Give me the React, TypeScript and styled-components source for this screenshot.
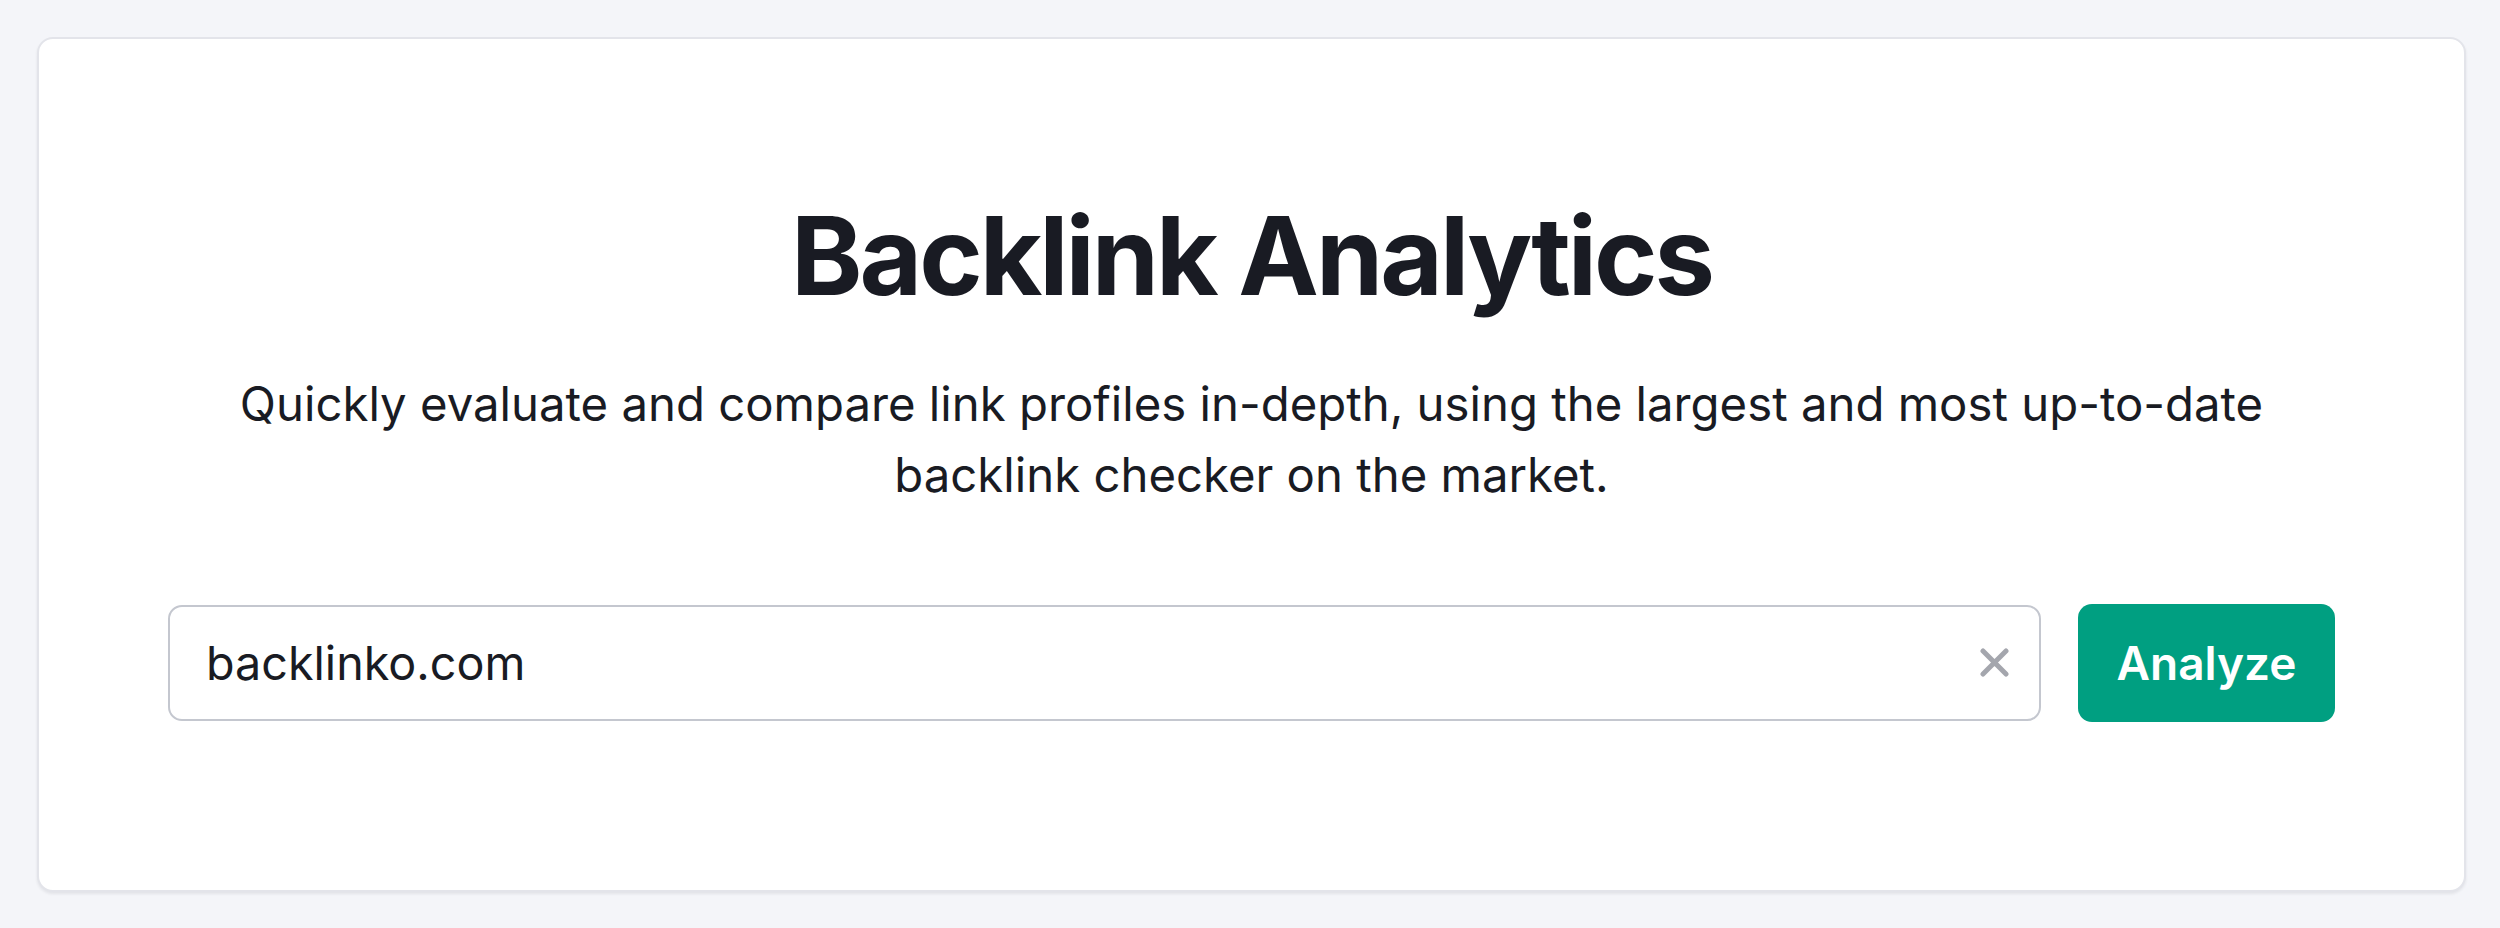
import styled, { createGlobalStyle } from 'styled-components';

const GlobalStyle = createGlobalStyle`
  html, body {
    margin: 0;
    padding: 0;
    background: #f4f5f9;
  }
  body {
    font-family: Inter, "Noto Sans", sans-serif;
    color: #191b23;
  }
`;

const Page = styled.div`
  padding: 37px 34px 37px 37px;
`;

const Card = styled.section`
  background: #ffffff;
  border: 2px solid #e3e4ea;
  border-radius: 16px;
  box-shadow: 0 2px 3px rgba(25, 27, 35, 0.08);
  padding: 152px 129px 168px;
  display: flex;
  flex-direction: column;
  align-items: center;
`;

const Title = styled.h1`
  margin: 0;
  font-family: Inter, sans-serif;
  font-weight: 700;
  font-size: 108px;
  line-height: 1.2;
  letter-spacing: -3px;
  color: #191b23;
`;

const Subtitle = styled.p`
  margin: 47px 0 0;
  max-width: 2080px;
  text-align: center;
  font-size: 47.3px;
  line-height: 71px;
  font-weight: 400;
  color: #191b23;
`;

const SearchRow = styled.form`
  margin-top: 95px;
  width: 100%;
  display: flex;
  gap: 37px;
`;

const InputBox = styled.div`
  flex: 1;
  height: 116px;
  box-sizing: border-box;
  border: 2px solid #c4c7cf;
  border-radius: 14px;
  display: flex;
  align-items: center;
  padding: 0 30px 0 36px;
`;

const Input = styled.input`
  flex: 1;
  border: none;
  outline: none;
  background: transparent;
  font-family: Inter, sans-serif;
  font-size: 46.7px;
  color: #191b23;
  padding: 0;
`;

const ClearButton = styled.button`
  border: none;
  background: none;
  padding: 0;
  display: flex;
  cursor: pointer;
`;

const AnalyzeButton = styled.button`
  width: 257px;
  height: 118px;
  margin-top: -1px;
  border: none;
  border-radius: 14px;
  background: #009f81;
  color: #ffffff;
  font-family: Inter, sans-serif;
  font-size: 46px;
  font-weight: 600;
  cursor: pointer;
`;

const ClearIcon = () => (
  <svg width="29" height="29" viewBox="0 0 29 29">
    <path d="M3 3 L26 26 M26 3 L3 26" stroke="#a4a6ad" strokeWidth="5" strokeLinecap="round" fill="none" />
  </svg>
);

export default function App() {
  return (
    <>
      <GlobalStyle />
      <Page>
        <Card>
          <Title>Backlink Analytics</Title>
          <Subtitle>
            Quickly evaluate and compare link profiles in-depth, using the largest and most up-to-date backlink
            checker on the market.
          </Subtitle>
          <SearchRow onSubmit={(e) => e.preventDefault()}>
            <InputBox>
              <Input defaultValue="backlinko.com" />
              <ClearButton type="button">
                <ClearIcon />
              </ClearButton>
            </InputBox>
            <AnalyzeButton type="submit">Analyze</AnalyzeButton>
          </SearchRow>
        </Card>
      </Page>
    </>
  );
}
